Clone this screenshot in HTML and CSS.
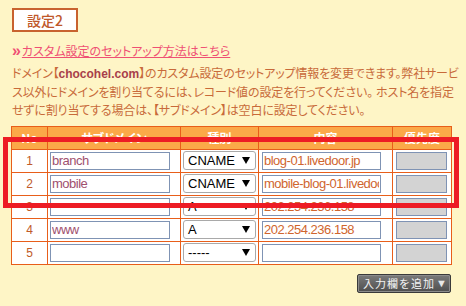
FILE: index.html
```html
<!DOCTYPE html>
<html lang="ja">
<head>
<meta charset="utf-8">
<title>設定2</title>
<link rel="stylesheet" href="styles.css">
</head>
<body>
<div class="page">
  <div class="title">設定2</div>
  <p class="guide"><span class="raquo">»</span><a href="#">カスタム設定のセットアップ方法はこちら</a></p>
  <p class="desc">ドメイン【<b>chocohel.com</b>】のカスタム設定のセットアップ情報を変更できます。弊社サービ<br>ス以外にドメインを割り当てるには、レコード値の設定を行ってください。 ホスト名を指定<br>せずに割り当てする場合は、【サブドメイン】は空白に設定してください。</p>
  <table class="records">
    <colgroup>
      <col class="c-no"><col class="c-sub"><col class="c-type"><col class="c-val"><col class="c-pri">
    </colgroup>
    <thead>
      <tr><th>No</th><th>サブドメイン</th><th>種別</th><th>内容</th><th>優先度</th></tr>
    </thead>
    <tbody>
      <tr>
        <td class="no">1</td>
        <td><input class="in sub" type="text" value="branch"></td>
        <td><div class="sel"><span>CNAME</span><svg width="8" height="7" viewBox="0 0 8 7"><path d="M0 0H8L4 7Z" fill="#000"/></svg></div></td>
        <td><input class="in val" type="text" value="blog-01.livedoor.jp"></td>
        <td><input class="in pri" type="text" value=""></td>
      </tr>
      <tr>
        <td class="no">2</td>
        <td><input class="in sub" type="text" value="mobile"></td>
        <td><div class="sel"><span>CNAME</span><svg width="8" height="7" viewBox="0 0 8 7"><path d="M0 0H8L4 7Z" fill="#000"/></svg></div></td>
        <td><input class="in val" type="text" value="mobile-blog-01.livedoor.jp"></td>
        <td><input class="in pri" type="text" value=""></td>
      </tr>
      <tr>
        <td class="no">3</td>
        <td><input class="in sub" type="text" value=""></td>
        <td><div class="sel"><span>A</span><svg width="8" height="7" viewBox="0 0 8 7"><path d="M0 0H8L4 7Z" fill="#000"/></svg></div></td>
        <td><input class="in val" type="text" value="202.254.236.158"></td>
        <td><input class="in pri" type="text" value=""></td>
      </tr>
      <tr>
        <td class="no">4</td>
        <td><input class="in sub" type="text" value="www"></td>
        <td><div class="sel"><span>A</span><svg width="8" height="7" viewBox="0 0 8 7"><path d="M0 0H8L4 7Z" fill="#000"/></svg></div></td>
        <td><input class="in val" type="text" value="202.254.236.158"></td>
        <td><input class="in pri" type="text" value=""></td>
      </tr>
      <tr>
        <td class="no">5</td>
        <td><input class="in sub" type="text" value=""></td>
        <td><div class="sel"><span>-----</span><svg width="8" height="7" viewBox="0 0 8 7"><path d="M0 0H8L4 7Z" fill="#000"/></svg></div></td>
        <td><input class="in val" type="text" value=""></td>
        <td><input class="in pri" type="text" value=""></td>
      </tr>
    </tbody>
  </table>
  <div class="actions"><button class="add" type="button"><span class="lbl">入力欄を追加</span><span class="tri">▼</span></button></div>
  <div class="highlight"></div>
</div>
</body>
</html>
```
FILE: styles.css
```css
html, body {
  margin: 0;
  padding: 0;
  background: #fef5c6;
}
body {
  font-family: "Liberation Sans", "Noto Sans CJK JP", sans-serif;
  font-feature-settings: "palt";
}
.page {
  position: relative;
  width: 466px;
  height: 306px;
  padding: 8px 0 0 12px;
  box-sizing: border-box;
}
.title {
  width: 62px;
  height: 20px;
  border: 2px solid #c8622e;
  background: #fff;
  color: #c0582a;
  font-family: "Noto Sans CJK JP", sans-serif;
  font-size: 14px;
  font-weight: 500;
  line-height: 20px;
  text-align: center;
}
.guide {
  margin: 10px 0 0;
  height: 18px;
  line-height: 18px;
  font-size: 12px;
  color: #ef5074;
  font-family: "Noto Sans CJK JP", sans-serif;
}
.guide .raquo {
  font-family: "Liberation Sans", sans-serif;
  font-weight: bold;
  font-size: 16px;
  margin-right: 1px;
}
.guide a {
  color: #ef5074;
  text-decoration: underline;
}
.desc {
  margin: 5px 0 0;
  font-size: 12px;
  line-height: 18.5px;
  color: #c86a3a;
  white-space: nowrap;
  letter-spacing: -0.15px;
}
.desc b {
  color: #a8404a;
  font-family: "Liberation Sans", sans-serif;
  letter-spacing: 0;
}
.records {
  margin: 5px 0 0 -1px;
  border-collapse: collapse;
  table-layout: fixed;
  width: 440px;
}
.c-no { width: 36px; }
.c-sub { width: 133px; }
.c-type { width: 78px; }
.c-val { width: 134px; }
.c-pri { width: 59px; }
.records th, .records td {
  border: 1px solid #e85e1a;
  padding: 2px 0 2px 2px;
  height: 18px;
  box-sizing: content-box;
}
.records th {
  background: #fba948;
  color: #fff;
  font-family: "Noto Sans CJK JP", sans-serif;
  font-size: 12px;
  font-weight: bold;
  text-align: center;
  padding: 2px 0;
  line-height: 18px;
}
.records td.no {
  background: #fff;
  color: #c05a28;
  font-size: 12px;
  text-align: center;
  padding-left: 0;
}
.records td {
  background: #fff;
  vertical-align: middle;
}
.in {
  display: block;
  box-sizing: border-box;
  height: 18px;
  margin: 0;
  border: 1px solid #7f93b4;
  padding: 0 1px;
  font-family: "Liberation Sans", sans-serif;
  font-size: 13px;
  letter-spacing: -0.5px;
  background: #fff;
  outline: none;
}
.in.sub {
  width: 120px;
  color: #a0506e;
}
.in.val {
  width: 119px;
  margin-left: 1px;
  color: #d0652e;
}
.in.pri {
  width: 51px;
  margin-left: 1px;
  background: #d3d3d3;
}
.sel {
  box-sizing: border-box;
  width: 73px;
  height: 19px;
  margin-top: -1px;
  border: 1px solid #a9a9a9;
  border-radius: 3px;
  background: #fff;
  display: flex;
  align-items: center;
  justify-content: space-between;
  padding: 0 5px 0 4px;
  font-family: "Liberation Sans", sans-serif;
  font-size: 13px;
  color: #000;
}
.actions {
  width: 439px;
  display: flex;
  justify-content: flex-end;
  margin-top: 9px;
}
.add {
  box-sizing: border-box;
  width: 94px;
  height: 19px;
  padding: 0 3px 0 5px;
  border: 1px solid #3a3a3a;
  border-radius: 2px;
  background: linear-gradient(#7a7a7a, #4e4e4e);
  box-shadow: inset 0 0 0 1px #8c8c8c;
  color: #f2f2f2;
  font-family: "Noto Sans CJK JP", sans-serif;
  font-size: 11px;
  line-height: 17px;
  white-space: nowrap;
  display: flex;
  align-items: center;
  justify-content: space-between;
}
.add .lbl {
  letter-spacing: 1px;
}
.add .tri {
  font-family: "Liberation Sans", sans-serif;
  font-size: 11px;
  color: #e8e8e8;
}
.highlight {
  position: absolute;
  left: 3px;
  top: 137px;
  width: 446px;
  height: 61px;
  border: 5px solid #ed1c24;
}
```
